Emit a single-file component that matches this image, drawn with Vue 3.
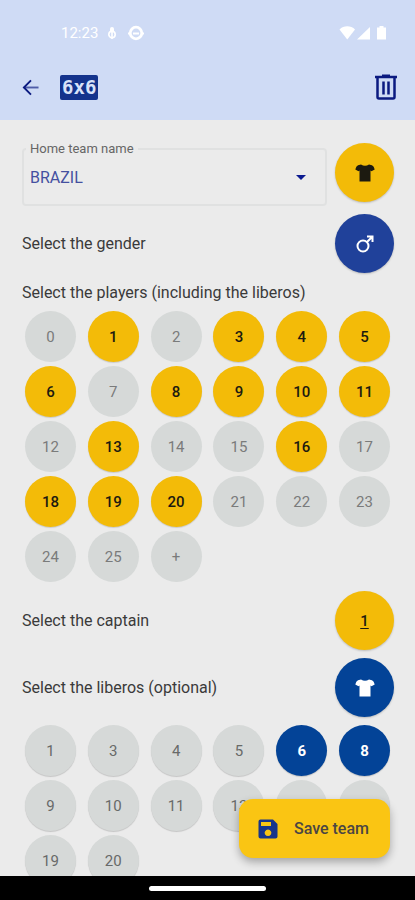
<script setup>
import { ref } from 'vue'

const team = ref('BRAZIL')
const players = ref(new Set([1, 3, 4, 5, 6, 8, 9, 10, 11, 13, 16, 18, 19, 20]))
const liberos = ref(new Set([6, 8]))
const numbers = Array.from({ length: 26 }, (_, i) => i)
const candidates = [1, 3, 4, 5, 6, 8, 9, 10, 11, 13, 16, 18, 19, 20]

function toggle(set, n) {
  if (set.has(n)) set.delete(n)
  else set.add(n)
}
</script>

<template>
  <div class="screen">
    <header class="top">
      <div class="status">
        <span class="clock">12:23</span>
        <svg class="mic" viewBox="0 0 10 14" aria-hidden="true">
          <rect x="3" y="1" width="4" height="6" rx="2" />
          <circle cx="5" cy="8.500" r="3.200" fill="none" stroke="currentColor" stroke-width="1.600" />
          <path d="M5 7v6" stroke="currentColor" stroke-width="1.600" />
        </svg>
        <svg class="disc" viewBox="0 0 16 16" aria-hidden="true">
          <circle cx="8" cy="8" r="5.800" fill="none" stroke="currentColor" stroke-width="2.800" />
          <path d="M0 8.500h2.500M13.500 8.500H16M5 8.500h6" stroke="currentColor" stroke-width="2" />
        </svg>
        <span class="spacer"></span>
        <svg class="signals" viewBox="0 0 48 16" aria-hidden="true">
          <path d="M.5 4.500C4.500 .3 12 .3 16 4.500L8.250 14.500Z" />
          <path d="M31 2v12.500H18Z" />
          <path d="M38 2.500h2.500V1h4v1.500H47v12h-9Z" />
        </svg>
      </div>
      <div class="bar">
        <button class="icon back" type="button" aria-label="Back">
          <svg viewBox="0 0 18 18">
            <path d="M17.500 9H2" stroke="currentColor" stroke-width="2" opacity=".65" />
            <path d="M9.500 1.500 2 9 9.500 16.500" fill="none" stroke="currentColor" stroke-width="2" />
          </svg>
        </button>
        <h1 class="badge">6x6</h1>
        <span class="spacer"></span>
        <button class="icon trash" type="button" aria-label="Delete team">
          <svg viewBox="0 0 24 26">
            <path d="M1 3h22" stroke="currentColor" stroke-width="2.500" />
            <path d="M8 1.500h8" stroke="currentColor" stroke-width="2" />
            <path d="M3.500 4v19q0 1.500 1.500 1.500h14q1.500 0 1.500-1.500V4" fill="none" stroke="currentColor" stroke-width="2.500" />
            <path d="M9.500 7.500v13M14.500 7.500v13" stroke="currentColor" stroke-width="2.500" />
          </svg>
        </button>
      </div>
    </header>

    <main class="content">
      <div class="row name">
        <div class="field">
          <label for="team">Home team name</label>
          <select id="team" v-model="team">
            <option>BRAZIL</option>
          </select>
          <svg class="caret" viewBox="0 0 10 5" aria-hidden="true"><path d="M0 0h10L5 5z" /></svg>
        </div>
        <button class="big yellow" type="button" aria-label="Team shirt colour">
          <svg class="shirt" viewBox="0 0 20 18">
            <path d="M6 .5Q10 3 14 .5L17 1.200Q19 2 19.700 5.500L16.500 7.200 15.500 6.500V17.500H4.500V6.500L3.500 7.200.3 5.500Q1 2 3 1.200Z" />
          </svg>
        </button>
      </div>

      <div class="row">
        <span class="text">Select the gender</span>
        <button class="big male" type="button" aria-label="Male">
          <svg class="mars" viewBox="0 0 18 18">
            <g fill="none" stroke="currentColor" stroke-width="2">
              <circle cx="7" cy="11" r="5.500" />
              <path d="M11 7 16 2M11 1.500h5.500V7" />
            </g>
          </svg>
        </button>
      </div>

      <h2 class="text heading">Select the players (including the liberos)</h2>
      <div class="grid">
        <button
          v-for="n in numbers"
          :key="n"
          type="button"
          class="chip"
          :class="{ yellow: players.has(n) }"
          :aria-pressed="players.has(n)"
          @click="toggle(players, n)"
        >{{ n }}</button>
        <button class="chip" type="button">+</button>
      </div>

      <div class="row">
        <span class="text">Select the captain</span>
        <button class="big yellow captain" type="button">1</button>
      </div>

      <div class="row">
        <span class="text">Select the liberos (optional)</span>
        <button class="big blue" type="button" aria-label="Libero shirt colour">
          <svg class="shirt" viewBox="0 0 20 18">
            <path d="M6 .5Q10 3 14 .5L17 1.200Q19 2 19.700 5.500L16.500 7.200 15.500 6.500V17.500H4.500V6.500L3.500 7.200.3 5.500Q1 2 3 1.200Z" />
          </svg>
        </button>
      </div>

      <div class="grid">
        <button
          v-for="n in candidates"
          :key="n"
          type="button"
          class="chip raised"
          :class="{ blue: liberos.has(n) }"
          :aria-pressed="liberos.has(n)"
          @click="toggle(liberos, n)"
        >{{ n }}</button>
      </div>
    </main>

    <button class="save" type="button">
      <svg viewBox="0 0 20 20" aria-hidden="true">
        <path
          fill-rule="evenodd"
          d="M2.500 0.500H15L19.500 5V17.500Q19.500 19.500 17.500 19.500H2.500Q.5 19.500.5 17.500V2.500Q.5.5 2.500.5ZM3 3V7H13V3ZM10 10.500a3.300 3.300 0 1 0 .01 0Z"
        />
      </svg>
      Save team
    </button>

    <footer class="nav"><span class="pill"></span></footer>
  </div>
</template>

<style>
body {
  margin: 0;
  background: #ebebeb;
}
</style>

<style scoped>
.screen {
  position: relative;
  display: flex;
  flex-direction: column;
  height: 100vh;
  overflow: hidden;
  background: #ebebeb;
  color: #3a3a3a;
  font-family: Roboto, sans-serif;
  font-size: 15px;
}
button,
select {
  padding: 0;
  border: 0;
  background: none;
  color: inherit;
  font: inherit;
  cursor: pointer;
}
svg {
  display: block;
  fill: currentColor;
}
.spacer {
  flex: 1;
}
.top {
  flex: none;
  background: #cfdbf5;
}
.status {
  display: flex;
  align-items: center;
  height: 54px;
  padding: 12px 28px 0 61px;
  box-sizing: border-box;
  color: #fff;
}
.clock {
  font-size: 15px;
}
.mic {
  width: 10px;
  height: 14px;
  margin-left: 9px;
}
.disc {
  width: 16px;
  height: 16px;
  margin-left: 11px;
}
.signals {
  width: 48px;
  height: 16px;
}
.bar {
  display: flex;
  align-items: center;
  height: 66px;
  padding: 0 17px 0 22px;
  color: #0b1a80;
}
.back svg {
  width: 17px;
  height: 17px;
}
.badge {
  margin: 0 0 0 21px;
  padding: 0 2px;
  border-radius: 2px;
  background: #14338c;
  color: #d8e2f8;
  font: bold 19px/25px "DejaVu Sans Mono", monospace;
}
.trash svg {
  width: 24px;
  height: 26px;
}
.content {
  flex: 1;
  min-height: 0;
  overflow: hidden;
  padding-top: 23px;
}
.row {
  display: flex;
  align-items: center;
  justify-content: space-between;
  gap: 8px;
  margin-bottom: 8px;
  padding: 0 21px 0 22px;
}
.name {
  align-items: flex-start;
}
.text {
  font-size: 16px;
  line-height: 20px;
}
.heading {
  margin: 10px 22px 8px;
  font-weight: 400;
}
.field {
  position: relative;
  flex: 1;
  margin-top: 5px;
  border: 2px solid #e0e1e1;
  border-radius: 4px;
}
.field label {
  position: absolute;
  top: -9px;
  left: 2px;
  padding: 0 4px;
  background: #ebebeb;
  color: #666;
  font-size: 13px;
  line-height: 16px;
}
.field select {
  display: block;
  width: 100%;
  height: 54px;
  padding: 0 6px;
  appearance: none;
  color: #4450a0;
  font-size: 16px;
}
.caret {
  position: absolute;
  top: 25px;
  right: 19px;
  width: 10px;
  height: 5px;
  color: #0b1a90;
  pointer-events: none;
}
.big {
  display: grid;
  place-items: center;
  flex: none;
  width: 59px;
  height: 59px;
  border-radius: 50%;
  box-shadow: 0 1px 2px rgba(0, 0, 0, 0.2);
  color: #1c1c1c;
}
.grid {
  display: grid;
  grid-template-columns: repeat(6, 51px);
  justify-content: space-between;
  gap: 4px 0;
  margin-bottom: 9px;
  padding: 0 25px;
}
.chip {
  height: 51px;
  border-radius: 50%;
  background: #d6d9d8;
  color: #7a7b7b;
  font-size: 15px;
}
.raised {
  box-shadow: 0 1px 1px rgba(0, 0, 0, 0.16);
  color: #686a69;
}
.yellow {
  background: #f3bb08;
  color: #1c1a10;
}
.chip.yellow {
  box-shadow: 0 1px 1px rgba(0, 0, 0, 0.14);
  font-weight: 500;
}
.male {
  background: #20419a;
  color: #fff;
}
.blue {
  background: #034397;
  color: #fff;
}
.chip.blue {
  font-weight: 700;
}
.captain {
  font-size: 15px;
  font-weight: 500;
  text-decoration: underline 1px;
  text-underline-offset: 2px;
}
.shirt {
  width: 20px;
  height: 18px;
}
.mars {
  width: 18px;
  height: 18px;
}
.save {
  position: absolute;
  right: 25px;
  bottom: 42px;
  display: flex;
  align-items: center;
  gap: 16px;
  padding: 19px 21px 19px 19px;
  border-radius: 14px;
  background: #fac513;
  box-shadow: 0 4px 8px rgba(0, 0, 0, 0.3);
  color: #4b4643;
  font-size: 16px;
  font-weight: 500;
  line-height: 21px;
}
.save svg {
  width: 20px;
  height: 20px;
  color: #17358c;
}
.nav {
  display: grid;
  place-items: center;
  flex: none;
  height: 24px;
  background: #000;
}
.pill {
  width: 28%;
  height: 5px;
  border-radius: 3px;
  background: #fff;
}
</style>
